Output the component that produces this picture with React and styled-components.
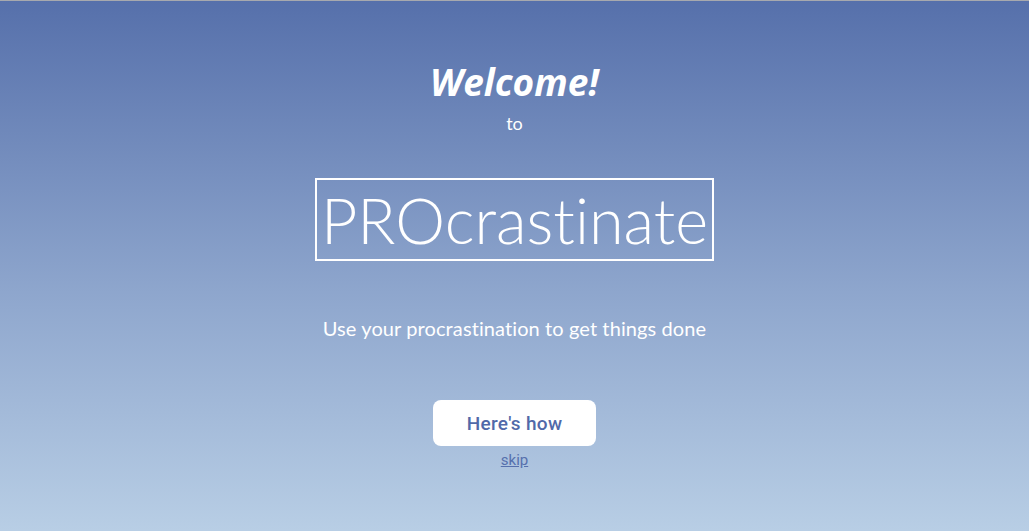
import React from 'react';
import styled, {createGlobalStyle} from 'styled-components';

const GlobalStyle = createGlobalStyle`
    html, body {
        margin: 0;
        padding: 0;
        height: 100%;
    }
    #root {
        height: 100%;
    }
`;

const Page = styled.div`
    box-sizing: border-box;
    height: 531px;
    border-top: 1px solid #a7a9ae;
    background: linear-gradient(to bottom, #5670ab 0%, #8ea6cd 55%, #b8cee5 100%);
    display: flex;
    flex-direction: column;
    align-items: center;
    color: #fff;
    font-family: Lato, "Open Sans", sans-serif;
`;

const Title = styled.h1`
    margin: 58px 0 0;
    font-family: "Open Sans", sans-serif;
    font-style: italic;
    font-weight: 700;
    font-size: 37px;
    line-height: 46px;
`;

const Small = styled.div`
    margin-top: 7px;
    font-size: 18px;
    line-height: 22px;
`;

const Logo = styled.div`
    margin-top: 44px;
    border: 2px solid #fff;
    padding: 0 4px;
    font-family: Lato, sans-serif;
    font-weight: 300;
    font-size: 63px;
    line-height: 79px;
    font-variant-ligatures: none;
`;

const Tagline = styled.p`
    margin: 55px 0 0;
    font-size: 20px;
    line-height: 24px;
    letter-spacing: 0.1px;
`;

const Button = styled.button`
    margin-top: 60px;
    width: 163px;
    height: 46px;
    border: none;
    border-radius: 8px;
    background: #fff;
    color: #5169a9;
    font-family: Roboto, sans-serif;
    font-weight: 500;
    font-size: 19px;
    letter-spacing: 0.3px;
    cursor: pointer;
`;

const Skip = styled.a`
    margin-top: 4px;
    color: #5670ad;
    font-family: Roboto, sans-serif;
    font-size: 15px;
    line-height: 20px;
    text-decoration: underline;
    cursor: pointer;
`;

const App = () => (
    <>
        <GlobalStyle/>
        <Page>
            <Title>Welcome!</Title>
            <Small>to</Small>
            <Logo>PROcrastinate</Logo>
            <Tagline>Use your procrastination to get things done</Tagline>
            <Button>Here's how</Button>
            <Skip>skip</Skip>
        </Page>
    </>
);

export default App;
